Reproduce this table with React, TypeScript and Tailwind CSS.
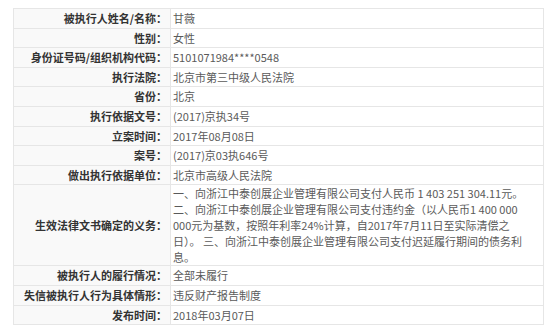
import React from 'react';

type Row = { label: string; value: React.ReactNode; tall?: boolean };

const rows: Row[] = [
  { label: '被执行人姓名/名称：', value: '甘薇' },
  { label: '性别：', value: '女性' },
  { label: '身份证号码/组织机构代码：', value: '5101071984****0548' },
  { label: '执行法院：', value: '北京市第三中级人民法院' },
  { label: '省份：', value: '北京' },
  { label: '执行依据文号：', value: '(2017)京执34号' },
  { label: '立案时间：', value: '2017年08月08日' },
  { label: '案号：', value: '(2017)京03执646号' },
  { label: '做出执行依据单位：', value: '北京市高级人民法院' },
  {
    label: '生效法律文书确定的义务：',
    tall: true,
    value:
      '一、向浙江中泰创展企业管理有限公司支付人民币 1 403 251 304.11元。二、向浙江中泰创展企业管理有限公司支付违约金（以人民币1 400 000 000元为基数，按照年利率24%计算，自2017年7月11日至实际清偿之日）。 三、向浙江中泰创展企业管理有限公司支付迟延履行期间的债务利息。',
  },
  { label: '被执行人的履行情况：', value: '全部未履行' },
  { label: '失信被执行人行为具体情形：', value: '违反财产报告制度' },
  { label: '发布时间：', value: '2018年03月07日' },
];

const App: React.FC = () => {
  return (
    <div className="w-[550px] h-[326px] overflow-hidden bg-white pt-[8px] pl-[13px] font-['Noto_Sans_CJK_SC',sans-serif] text-[11px]">
      <div className="w-[531px] border-l border-t border-r border-[#e6e6e6]">
        {rows.map((r) => (
          <div
            key={r.label}
            className={`flex border-b border-[#e6e6e6] ${r.tall ? 'h-[81px]' : 'h-[19.6px]'}`}
          >
            <div className="w-[157px] shrink-0 flex items-center justify-end pr-[3px] bg-[#f9f9f9] border-r border-[#e6e6e6] font-bold text-[#333]">
              {r.label}
            </div>
            <div
              className={`flex-1 pl-[2px] text-[#5a5a5a] ${
                r.tall ? 'leading-[16px] w-[358px] max-w-[358px]' : 'flex items-center'
              }`}
            >
              {r.value}
            </div>
          </div>
        ))}
      </div>
    </div>
  );
};

export default App;
